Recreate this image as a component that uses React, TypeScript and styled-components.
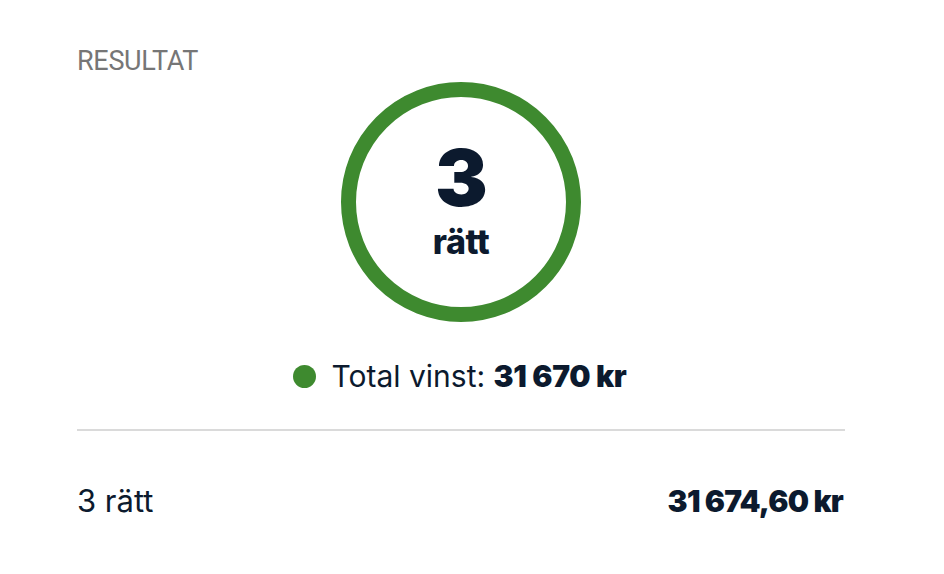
import React from 'react';
import styled, { createGlobalStyle } from 'styled-components';

const GlobalStyle = createGlobalStyle`
  body {
    margin: 0;
    background: #ffffff;
    font-family: Inter, "Noto Sans", sans-serif;
    color: #0c1a2e;
  }
`;

const Card = styled.section`
  width: 768px;
  padding: 46px 0 0 77px;
  display: flex;
  flex-direction: column;
`;

const Title = styled.h2`
  margin: 0;
  font-family: Roboto, "Liberation Sans", sans-serif;
  font-weight: 400;
  font-size: 27px;
  line-height: 30px;
  letter-spacing: -0.3px;
  color: #767676;
`;

const Ring = styled.div`
  align-self: center;
  box-sizing: border-box;
  width: 240px;
  height: 240px;
  margin-top: 6px;
  padding-bottom: 10px;
  border: 15px solid #3e8a2f;
  border-radius: 50%;
  display: flex;
  flex-direction: column;
  align-items: center;
  justify-content: center;
`;

const Count = styled.div`
  margin-bottom: -2px;
  font-size: 79px;
  font-weight: 900;
  line-height: 1.16;
  letter-spacing: -1px;
`;

const CountLabel = styled.div`
  font-size: 34px;
  font-weight: 800;
  line-height: 1.21;
  letter-spacing: -0.5px;
`;

const Total = styled.div`
  align-self: center;
  margin-top: 36px;
  margin-right: 2px;
  display: flex;
  align-items: center;
  gap: 15px;
  font-size: 30px;
  line-height: 36px;
`;

const Dot = styled.span`
  width: 23px;
  height: 23px;
  border-radius: 50%;
  background: #3e8a2f;
`;

const Strong = styled.b`
  font-weight: 900;
  letter-spacing: -0.3px;
`;

const Divider = styled.hr`
  margin: 35px 0 0;
  border: 0;
  height: 2px;
  background: #dadada;
`;

const Row = styled.div`
  margin-top: 52px;
  display: flex;
  justify-content: space-between;
  align-items: center;
  font-size: 31px;
  line-height: 36px;
`;

const RowLabel = styled.span`
  letter-spacing: 0;
`;

const RowValue = styled.span`
  margin-right: 2px;
  font-size: 30px;
  font-weight: 900;
  letter-spacing: -0.8px;
`;

const App = () => {
  return (
    <>
      <GlobalStyle />
      <Card>
        <Title>RESULTAT</Title>
        <Ring>
          <Count>3</Count>
          <CountLabel>rätt</CountLabel>
        </Ring>
        <Total>
          <Dot />
          <span>
            Total vinst: <Strong>31 670 kr</Strong>
          </span>
        </Total>
        <Divider />
        <Row>
          <RowLabel>3 rätt</RowLabel>
          <RowValue>31 674,60 kr</RowValue>
        </Row>
      </Card>
    </>
  );
};

export default App;
